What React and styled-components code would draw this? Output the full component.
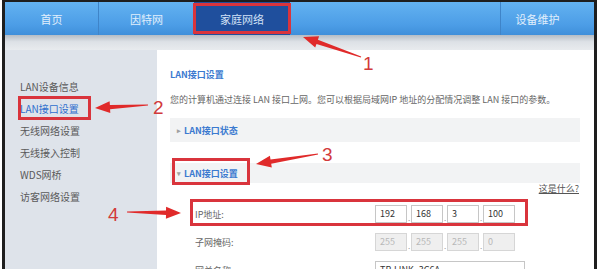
import React from "react";
import styled, { createGlobalStyle } from "styled-components";

const GlobalStyle = createGlobalStyle`
  html, body {
    margin: 0;
    padding: 0;
    background: #fff;
  }
  body {
    font-family: "Noto Sans CJK SC", "Noto Sans", sans-serif;
  }
`;

const Page = styled.div`
  position: relative;
  width: 600px;
  height: 269px;
  overflow: hidden;
  background: #fff;
`;

const Frame = styled.div`
  margin-left: 2px;
  width: 589px;
  height: 267px;
  border-style: solid;
  border-color: #1e1e1e;
  border-width: 2px 3px 0 3px;
  display: flex;
  flex-direction: column;
`;

const Nav = styled.div`
  height: 33px;
  display: flex;
  background: linear-gradient(#63b2f1, #4c9de6 70%, #3f8fda);
  flex-shrink: 0;
`;

const NavItem = styled.div`
  width: ${(p) => p.$w}px;
  display: flex;
  align-items: center;
  justify-content: center;
  box-sizing: content-box;
  padding-right: ${(p) => p.$pr || 0}px;
  font-size: 11px;
  color: ${(p) => (p.$active ? "#d3e1f6" : "#e1effc")};
  background: ${(p) => (p.$active ? "#1f4f9d" : "transparent")};
  border-right: ${(p) => (p.$sepRight ? "1px solid #3f84c8" : "none")};
  border-left: ${(p) => (p.$sepLeft ? "1px solid #3f84c8" : "none")};
`;

const NavSpacer = styled.div`
  flex: 1;
`;

const Band = styled.div`
  height: 15px;
  flex-shrink: 0;
  background: linear-gradient(#b4bcc5, #dde1e6 45%, #e8ebee);
`;

const Body = styled.div`
  flex: 1;
  display: flex;
  min-height: 0;
`;

const Sidebar = styled.div`
  width: 152px;
  flex-shrink: 0;
  background: #dee3ea;
  padding: 26px 0 0 15px;
  box-sizing: border-box;
`;

const SideItem = styled.div`
  font-size: 10px;
  line-height: 22px;
  color: ${(p) => (p.$active ? "#2f6fce" : "#5a5a5a")};
  white-space: nowrap;
`;

const Main = styled.div`
  flex: 1;
  background: #fff;
  padding: 19px 14px 0 13px;
  box-sizing: border-box;
  overflow: hidden;
`;

const Heading = styled.div`
  font-size: 9px;
  line-height: 12px;
  font-weight: bold;
  color: #3b7ad0;
`;

const Desc = styled.div`
  margin-top: 13px;
  font-size: 9px;
  line-height: 12px;
  color: #666;
  white-space: nowrap;
`;

const SectionBar = styled.div`
  margin-top: ${(p) => p.$mt}px;
  height: ${(p) => p.$h}px;
  background: #f2f3f4;
  display: flex;
  align-items: center;
  padding-left: 7px;
  font-size: 9px;
  font-weight: bold;
  color: #3b7ad0;
`;

const Caret = styled.span`
  font-size: 7px;
  color: #a0a0a0;
  margin-right: 3px;
`;

const HelpRow = styled.div`
  height: 17px;
  text-align: right;
  font-size: 9px;
  line-height: 12px;
  color: #555;
  padding-right: 1px;
`;

const HelpLink = styled.span`
  text-decoration: underline;
`;

const FormRow = styled.div`
  height: 28px;
  display: flex;
  align-items: center;
  padding-left: 25px;
`;

const Label = styled.div`
  width: 180px;
  flex-shrink: 0;
  font-size: 9px;
  color: #666;
`;

const IpGroup = styled.div`
  display: flex;
  align-items: center;
`;

const IpBox = styled.div`
  width: ${(p) => p.$w || 32}px;
  height: 18px;
  box-sizing: border-box;
  border: 1px solid ${(p) => (p.$disabled ? "#d6d6d6" : "#c6c6c6")};
  background: ${(p) => (p.$disabled ? "#efefef" : "#fff")};
  color: ${(p) => (p.$disabled ? "#b8b8b8" : "#333")};
  font-size: 9px;
  line-height: 16px;
  padding-left: 4px;
`;

const Dot = styled.span`
  width: 4px;
  text-align: center;
  font-size: 8px;
  color: #999;
  align-self: flex-end;
  line-height: 10px;
`;

const Overlay = styled.svg`
  position: absolute;
  left: 0;
  top: 0;
  pointer-events: none;
`;

const RedBox = styled.div`
  position: absolute;
  left: ${(p) => p.$x}px;
  top: ${(p) => p.$y}px;
  width: ${(p) => p.$w}px;
  height: ${(p) => p.$h}px;
  box-sizing: border-box;
  border: 3px solid #d9343c;
  pointer-events: none;
`;

const Num = styled.span`
  position: absolute;
  left: ${(p) => p.$x}px;
  top: ${(p) => p.$y}px;
  font-family: "Liberation Sans", Arial, sans-serif;
  font-size: 19px;
  line-height: 19px;
  color: #d23a3a;
`;

const arrowPoints = (tail, tip, headLen = 15, headW = 6, shaft = 2.2) => {
  const dx = tip[0] - tail[0];
  const dy = tip[1] - tail[1];
  const len = Math.hypot(dx, dy);
  const ux = dx / len;
  const uy = dy / len;
  const nx = -uy;
  const ny = ux;
  const neck = [tip[0] - ux * headLen, tip[1] - uy * headLen];
  const p = (b, s) => `${(b[0] + nx * s).toFixed(1)},${(b[1] + ny * s).toFixed(1)}`;
  return [
    p(tail, 0.5),
    p(neck, shaft),
    p(neck, headW),
    `${tip[0]},${tip[1]}`,
    p(neck, -headW),
    p(neck, -shaft),
    p(tail, -0.5),
  ].join(" ");
};

const arrows = [
  { tail: [361, 57], tip: [303, 37] },
  { tail: [148, 105], tip: [95, 108] },
  { tail: [318, 154], tip: [256, 164] },
  { tail: [127, 212], tip: [181, 213] },
];

const sideItems = ["LAN设备信息", "LAN接口设置", "无线网络设置", "无线接入控制", "WDS网桥", "访客网络设置"];

const IpFields = ({ values, disabled }) => (
  <IpGroup>
    {values.map((v, i) => (
      <React.Fragment key={i}>
        {i > 0 && <Dot>.</Dot>}
        <IpBox $disabled={disabled}>{v}</IpBox>
      </React.Fragment>
    ))}
  </IpGroup>
);

const App = () => {
  return (
    <Page>
      <GlobalStyle />
      <Frame>
        <Nav>
          <NavItem $w={93} $sepRight>首页</NavItem>
          <NavItem $w={95}>因特网</NavItem>
          <NavItem $w={96} $active>家庭网络</NavItem>
          <NavSpacer />
          <NavItem $w={73} $pr={20} $sepLeft>设备维护</NavItem>
        </Nav>
        <Band />
        <Body>
          <Sidebar>
            {sideItems.map((s, i) => (
              <SideItem key={s} $active={i === 1}>
                {s}
              </SideItem>
            ))}
          </Sidebar>
          <Main>
            <Heading>LAN接口设置</Heading>
            <Desc>
              您的计算机通过连接 LAN 接口上网。您可以根据局域网IP 地址的分配情况调整 LAN 接口的参数。
            </Desc>
            <SectionBar $mt={12} $h={24}>
              <Caret>▸</Caret>LAN接口状态
            </SectionBar>
            <SectionBar $mt={21} $h={20}>
              <Caret>▾</Caret>LAN接口设置
            </SectionBar>
            <HelpRow>
              <HelpLink>这是什么?</HelpLink>
            </HelpRow>
            <FormRow>
              <Label>IP地址:</Label>
              <IpFields values={["192", "168", "3", "100"]} />
            </FormRow>
            <FormRow>
              <Label>子网掩码:</Label>
              <IpFields values={["255", "255", "255", "0"]} disabled />
            </FormRow>
            <FormRow>
              <Label>网关名称:</Label>
              <IpBox $w={150}>TP-LINK_3C6A</IpBox>
            </FormRow>
          </Main>
        </Body>
      </Frame>

      <RedBox $x={193} $y={3} $w={98} $h={31} />
      <RedBox $x={18} $y={96} $w={73} $h={24} />
      <RedBox $x={172} $y={158} $w={78} $h={27} />
      <RedBox $x={190} $y={199} $w={338} $h={27} />
      <Overlay width="600" height="269" viewBox="0 0 600 269">
        {arrows.map((a, i) => (
          <polygon key={i} points={arrowPoints(a.tail, a.tip)} fill="#e02a2a" />
        ))}
      </Overlay>
      <Num $x={363} $y={54}>1</Num>
      <Num $x={153} $y={98}>2</Num>
      <Num $x={322} $y={145}>3</Num>
      <Num $x={108} $y={205}>4</Num>
    </Page>
  );
};

export default App;
